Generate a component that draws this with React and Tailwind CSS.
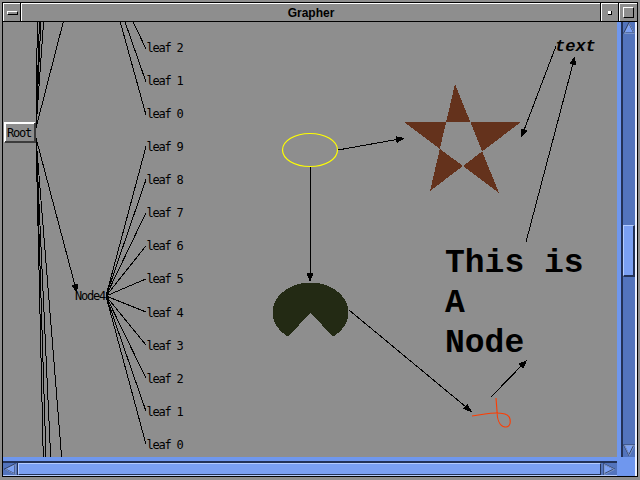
import React from 'react';

const topLeaves = [
    { label: 'leaf 2', c: 47 },
    { label: 'leaf 1', c: 80 },
    { label: 'leaf 0', c: 113 },
];
const nodeLeaves = ['leaf 9', 'leaf 8', 'leaf 7', 'leaf 6', 'leaf 5', 'leaf 4', 'leaf 3', 'leaf 2', 'leaf 1', 'leaf 0'].map((label, i) => ({
    label,
    c: 146.5 + 33.1 * i,
}));

// far ends of the edges that leave Root toward nodes scrolled out of view
const rootUp = [37.3, 39.3, 40.7, 43.3, 62.3];
const rootDown = [43.3, 46, 50.7, 61.7];

const Arrow = ({ x1, y1, x2, y2, len = 9, w = 3.5 }) => {
    const dx = x2 - x1;
    const dy = y2 - y1;
    const L = Math.hypot(dx, dy);
    const ux = dx / L;
    const uy = dy / L;
    const bx = x2 - ux * len;
    const by = y2 - uy * len;
    const px = -uy * w;
    const py = ux * w;
    return (
        <g>
            <line x1={x1} y1={y1} x2={bx} y2={by} stroke="black" />
            <polygon points={`${x2},${y2} ${bx + px},${by + py} ${bx - px},${by - py}`} fill="black" />
        </g>
    );
};

const ArrowIcon = ({ dir }) => {
    const pts = {
        up: '6,1 11,11 1,11',
        down: '1,1 11,1 6,11',
        left: '1,6 11,1 11,11',
        right: '1,1 11,6 1,11',
    }[dir];
    return (
        <svg width="12" height="12" viewBox="0 0 12 12">
            <polygon points={pts} fill="#7ba0f2" stroke="#233256" strokeWidth="1.2" />
            <polygon points={pts} fill="none" stroke="#b4ccff" strokeWidth="0.6" transform="translate(0.4 0.4)" />
        </svg>
    );
};

const Graph = () => (
    <svg width="614" height="435" viewBox="3 22 614 435" className="block" shapeRendering="crispEdges">
        {/* edges from Root to nodes out of view */}
        {rootUp.map((x, i) => (
            <line key={`u${i}`} x1={36} y1={128} x2={36 + (x - 36) * 1.25} y2={0} stroke="black" />
        ))}
        {rootDown.map((x, i) => (
            <line key={`d${i}`} x1={36} y1={138} x2={36 + (x - 36) * 1.1} y2={490} stroke="black" />
        ))}

        {/* leaves of the node above the view */}
        {topLeaves.map((l) => (
            <line key={l.label} x1={102} y1={-44} x2={146} y2={l.c + 2} stroke="black" />
        ))}

        {/* Node4 and its leaves */}
        {nodeLeaves.map((l, i) => (
            <line key={i} x1={106} y1={296} x2={146} y2={l.c} stroke="black" />
        ))}

        <Arrow x1={36} y1={138} x2={77} y2={293} />

        {/* Root button */}
        <rect x="4" y="122" width="31" height="21" fill="#8e8e8e" />
        <polyline points="5,142 5,123 35,123" fill="none" stroke="white" strokeWidth="2" />
        <polyline points="5,142 35,142 35,123" fill="none" stroke="#3c3c3c" strokeWidth="2" />
        <text x="7" y="137" className="font-['DejaVu_Sans_Mono',monospace] text-[12px] tracking-[-1.2px]" fill="black">Root</text>

        <text x="75" y="300" className="font-['DejaVu_Sans_Mono',monospace] text-[12px] tracking-[-1.2px]" fill="black">Node4</text>

        {topLeaves.concat(nodeLeaves).map((l, i) => (
            <text key={`t${i}`} x="146.5" y={l.c + 4.5} className="font-['DejaVu_Sans_Mono',monospace] text-[12px] tracking-[-1.2px]" fill="black">
                {l.label}
            </text>
        ))}

        {/* right-hand picture nodes */}
        <ellipse cx="310" cy="150" rx="27.5" ry="16.5" fill="none" stroke="#ffff00" strokeWidth="1.2" shapeRendering="auto" />
        <polygon points="455,84 499,193 404,122 521,122 430,191" fill="#64321c" fillRule="evenodd" />
        <path d="M 310.5 312.5 L 288.2 336.8 A 38 30 0 1 1 332.8 336.8 Z" fill="#232a14" />
        <path
            d="M 472 416 L 485 414 Q 497 412 505 414 C 512 416 512 428 505 427 C 499 426 497 418 497 411 L 496 398"
            fill="none"
            stroke="#ff3c00"
            strokeWidth="1.1"
            shapeRendering="auto"
        />

        <Arrow x1={338} y1={150} x2={405} y2={138} />
        <Arrow x1={310} y1={167} x2={310} y2={282} />
        <Arrow x1={349} y1={310} x2={472} y2={412} />
        <Arrow x1={491} y1={397} x2={527} y2={360} />
        <Arrow x1={556} y1={46} x2={521} y2={138} />
        <Arrow x1={526} y1={242} x2={575} y2={56} />

        <text x="555" y="50.5" className="font-['Liberation_Mono',monospace] font-bold italic text-[17px]" fill="black">text</text>
        <g className="font-['Liberation_Mono',monospace] font-bold text-[33px]" fill="black">
            <text x="445" y="272">This is</text>
            <text x="445" y="312">A</text>
            <text x="445" y="352">Node</text>
        </g>
    </svg>
);

const App = () => {
    return (
        <div className="w-[640px] h-[480px] bg-[#8e8e8e] pl-[2px] pt-[2px] pr-[2px] pb-[3px] flex">
            <div className="flex-1 flex flex-col border border-black">
                {/* title bar */}
                <div className="h-[19px] flex border-b border-black bg-[#8e8e8e]">
                    <div className="w-[18px] border-r border-black">
                        <div className="h-full border-t border-l border-white flex items-center justify-center">
                            <div className="w-[11px] h-[4px] border-t border-l border-white border-b border-r border-b-black border-r-black" />
                        </div>
                    </div>
                    <div className="flex-1 border-r border-black">
                        <div className="h-full border-t border-l border-white flex items-center justify-center font-['Liberation_Sans',sans-serif] font-bold text-[12px] text-black">
                            Grapher
                        </div>
                    </div>
                    <div className="w-[18px] border-r border-black">
                        <div className="h-full border-t border-l border-white flex items-center justify-center">
                            <div className="w-[4px] h-[4px] bg-white border-r border-b border-black" />
                        </div>
                    </div>
                    <div className="w-[18px]">
                        <div className="h-full border-t border-l border-white flex items-center justify-center">
                            <div className="w-[11px] h-[11px] border border-white border-b-black border-r-black" />
                        </div>
                    </div>
                </div>

                {/* canvas + scrollbars */}
                <div className="flex-1 flex">
                    <div className="w-[614px] flex flex-col">
                        <div className="h-[435px] bg-[#8e8e8e] overflow-hidden">
                            <Graph />
                        </div>
                        <div className="h-[19px] flex flex-col">
                            <div className="h-[4px] bg-[#6f97ee]" />
                            <div className="h-[2px] bg-[#233256]" />
                            <div className="h-[12px] flex bg-[#5374bc]">
                                <div className="w-[15px] flex items-center justify-center border-r border-[#233256]">
                                    <ArrowIcon dir="left" />
                                </div>
                                <div className="flex-1 bg-[#7ba0f2] border-t border-l border-[#b4ccff] border-b-[#233256] border-r-[#233256] border-b border-r" />
                                <div className="w-[16px] flex items-center justify-center">
                                    <ArrowIcon dir="right" />
                                </div>
                            </div>
                            <div className="h-[1px] bg-[#b4ccff]" />
                        </div>
                    </div>
                    <div className="w-[20px] flex flex-col">
                        <div className="h-[435px] flex">
                            <div className="w-[4px] bg-[#6f97ee]" />
                            <div className="w-[2px] bg-[#233256]" />
                            <div className="w-[12px] bg-[#5374bc] flex flex-col">
                                <div className="h-[12px] flex items-center justify-center">
                                    <ArrowIcon dir="up" />
                                </div>
                                <div className="h-[191px]" />
                                <div className="h-[52px] bg-[#7ba0f2] border-t border-l border-[#b4ccff] border-b-[#233256] border-r-[#233256] border-b-2 border-r-2" />
                                <div className="flex-1" />
                                <div className="h-[14px] flex items-center justify-center">
                                    <ArrowIcon dir="down" />
                                </div>
                            </div>
                            <div className="w-[2px] bg-[#eef2ff]" />
                        </div>
                        <div className="h-[19px] bg-[#6f97ee] border-r-2 border-[#eef2ff]" />
                    </div>
                </div>
            </div>
        </div>
    );
};

export default App;
